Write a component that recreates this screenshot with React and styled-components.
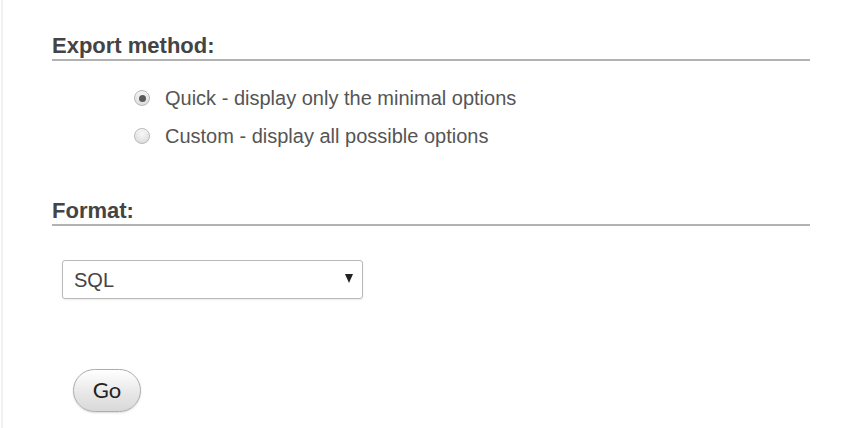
import styled, { createGlobalStyle } from 'styled-components';

const GlobalStyle = createGlobalStyle`
  html, body {
    margin: 0;
    padding: 0;
    background: #fff;
  }
  body {
    font-family: "Liberation Sans", Arial, sans-serif;
    color: #444;
  }
`;

const Page = styled.div`
  min-height: 428px;
  box-sizing: border-box;
  margin-left: 1px;
  border-left: 2px solid #f1f1f1;
  padding: 33px 33px 0 49px;
`;

const Section = styled.fieldset`
  border: 0;
  margin: 0 0 ${p => p.$gap}px;
  padding: 0;
  min-width: 0;
`;

const Heading = styled.h2`
  margin: 0;
  font-size: 22px;
  line-height: 26px;
  font-weight: 700;
  color: #444;
  border-bottom: 2px solid #b2b2b2;
`;

const Options = styled.div`
  display: flex;
  flex-direction: column;
  margin-top: 18px;
  padding-left: 82px;
`;

const Option = styled.label`
  display: flex;
  align-items: center;
  gap: 15px;
  height: 38px;
  font-size: 20px;
  color: #555;
  cursor: pointer;
`;

const Radio = styled.input.attrs({ type: 'radio' })`
  appearance: none;
  margin: 0;
  width: 16px;
  height: 16px;
  border-radius: 50%;
  border: 1px solid #b8b8b8;
  background: radial-gradient(circle at 50% 35%, #f8f8f8, #d6d6d6);
  box-shadow: inset 0 1px 1px rgba(255, 255, 255, 0.8);
  display: grid;
  place-items: center;
  flex: none;

  &:checked::after {
    content: '';
    width: 7px;
    height: 7px;
    border-radius: 50%;
    background: #5a5a5a;
  }
`;

const SelectWrap = styled.div`
  position: relative;
  width: 301px;
  margin: 34px 0 0 10px;
`;

const Select = styled.select`
  appearance: none;
  width: 100%;
  height: 39px;
  box-sizing: border-box;
  padding: 0 30px 0 11px;
  border: 1px solid #b9b9b9;
  border-radius: 3px;
  background: #fff;
  box-shadow: 0 1px 2px rgba(0, 0, 0, 0.08);
  font-family: "Liberation Sans", Arial, sans-serif;
  font-size: 20px;
  color: #444;
  outline: none;
`;

const Arrow = styled.span`
  position: absolute;
  right: 10px;
  top: 14px;
  width: 0;
  height: 0;
  border-left: 4.5px solid transparent;
  border-right: 4.5px solid transparent;
  border-top: 9px solid #222;
  pointer-events: none;
`;

const GoButton = styled.button`
  display: block;
  margin: 70px 0 0 21px;
  width: 68px;
  height: 43px;
  padding: 0 0 3px;
  border: 1px solid #adadad;
  border-radius: 22px;
  background: linear-gradient(#ffffff, #e6e6e6 60%, #d9d9d9);
  box-shadow: 0 1px 2px rgba(0, 0, 0, 0.15);
  font-family: Lato, "Open Sans", sans-serif;
  font-size: 22px;
  color: #222;
  cursor: pointer;
`;

export default function App() {
  return (
    <>
      <GlobalStyle />
      <Page>
        <Section $gap={43}>
          <Heading>Export method:</Heading>
          <Options>
            <Option>
              <Radio name="method" defaultChecked />
              Quick - display only the minimal options
            </Option>
            <Option>
              <Radio name="method" />
              Custom - display all possible options
            </Option>
          </Options>
        </Section>
        <Section $gap={0}>
          <Heading>Format:</Heading>
          <SelectWrap>
            <Select defaultValue="sql">
              <option value="sql">SQL</option>
              <option value="csv">CSV</option>
              <option value="json">JSON</option>
            </Select>
            <Arrow />
          </SelectWrap>
        </Section>
        <GoButton>Go</GoButton>
      </Page>
    </>
  );
}
